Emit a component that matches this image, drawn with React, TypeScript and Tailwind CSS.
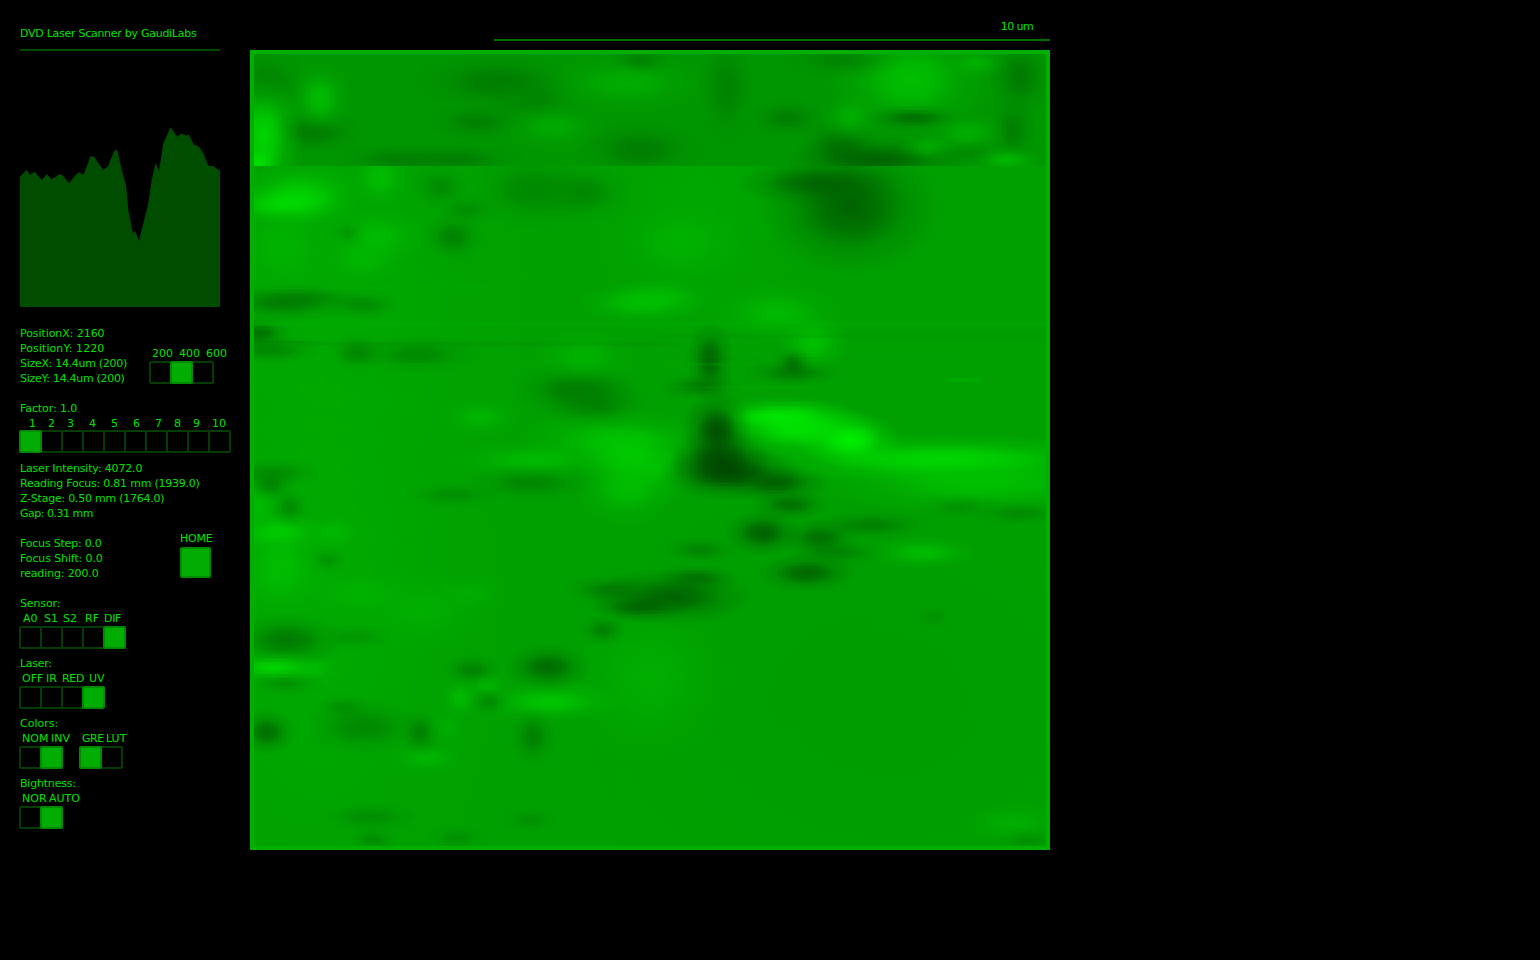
type Blob = [number, number, number, number, string];

const topBlobs: Blob[] = [
  [267, 83, 20, 18, "#008000"], [312, 132, 26, 12, "#007800"], [497, 82, 42, 15, "#007800"],
  [477, 122, 26, 10, "#007800"], [533, 100, 26, 15, "#008400"], [400, 160, 32, 9, "#007400"],
  [457, 160, 32, 9, "#007400"], [640, 62, 16, 8, "#006f00"], [640, 150, 32, 15, "#007800"],
  [320, 98, 15, 18, "#00c000"], [263, 137, 20, 32, "#00dc00"], [258, 165, 12, 10, "#00f000"],
  [553, 127, 26, 12, "#00ac00"], [627, 83, 42, 15, "#00b000"], [910, 80, 42, 28, "#00c400"],
  [977, 63, 16, 8, "#00b800"], [1020, 77, 16, 20, "#007600"], [1013, 130, 12, 18, "#007c00"],
  [727, 87, 15, 30, "#008000"], [787, 118, 20, 10, "#007400"], [843, 60, 32, 10, "#007c00"],
  [840, 147, 22, 15, "#007000"], [877, 160, 46, 12, "#005c00"], [913, 118, 26, 7, "#005c00"],
  [850, 117, 15, 12, "#00b000"], [967, 133, 20, 10, "#00b800"], [927, 147, 15, 7, "#00b400"],
  [970, 153, 18, 5, "#007c00"], [1007, 160, 18, 6, "#00d800"],
];

const lowBlobs: Blob[] = [
  [330, 300, 110, 170, "#00a800"], [320, 600, 100, 200, "#00aa00"], [880, 700, 190, 150, "#009c00"], [700, 200, 60, 90, "#00a800"],
  [300, 195, 32, 16, "#00d000"], [283, 205, 30, 10, "#00e800"], [380, 178, 15, 15, "#00c000"],
  [377, 237, 26, 15, "#00bc00"], [363, 260, 20, 12, "#00b800"], [283, 247, 26, 26, "#00b400"],
  [533, 190, 32, 20, "#008400"], [583, 193, 26, 15, "#008400"], [453, 237, 15, 12, "#007c00"],
  [440, 187, 15, 12, "#008800"], [467, 210, 16, 8, "#008400"], [348, 233, 10, 6, "#008400"],
  [640, 303, 32, 10, "#00c800"], [283, 303, 36, 10, "#006c00"], [307, 298, 32, 6, "#007400"],
  [363, 305, 20, 8, "#008000"], [260, 333, 16, 8, "#005c00"], [270, 350, 26, 3, "#006000"],
  [417, 355, 32, 10, "#007c00"], [357, 353, 15, 10, "#007800"], [577, 390, 32, 15, "#007400"],
  [597, 403, 26, 15, "#008000"], [480, 417, 20, 10, "#00bc00"], [617, 440, 52, 15, "#00c400"],
  [583, 357, 26, 15, "#00b400"], [817, 183, 42, 12, "#006400"], [850, 207, 46, 35, "#005c00"],
  [680, 243, 32, 20, "#00b400"], [660, 297, 26, 10, "#00c000"], [777, 313, 32, 15, "#00bc00"],
  [813, 343, 18, 14, "#00c400"], [710, 360, 12, 20, "#005c00"], [793, 363, 10, 8, "#006400"],
  [793, 373, 26, 4, "#005800"], [700, 387, 22, 6, "#005800"],
  [650, 467, 30, 18, "#00c000"], [943, 460, 95, 13, "#00e000"], [983, 483, 85, 16, "#00c400"],
  [780, 417, 42, 10, "#00ff00"], [850, 440, 26, 14, "#00f800"], [800, 430, 40, 14, "#00e800"],
  [717, 430, 18, 20, "#004400"], [720, 460, 26, 16, "#004400"], [730, 473, 36, 14, "#004400"],
  [777, 483, 26, 10, "#004c00"], [790, 505, 20, 8, "#005c00"], [923, 553, 28, 8, "#00c800"],
  [763, 533, 20, 12, "#005800"], [820, 538, 20, 10, "#005c00"], [807, 573, 26, 10, "#005000"],
  [697, 578, 22, 6, "#004800"], [673, 597, 42, 15, "#005c00"], [837, 553, 26, 3, "#006800"],
  [700, 550, 20, 4, "#006800"], [870, 525, 32, 8, "#007400"], [1020, 513, 26, 6, "#007400"],
  [960, 507, 22, 4, "#008000"], [933, 617, 12, 6, "#008800"], [1027, 840, 16, 5, "#007c00"],
  [1013, 823, 26, 10, "#00b400"], [650, 677, 42, 42, "#00b000"],
  [277, 533, 24, 10, "#00dc00"], [333, 533, 16, 10, "#00bc00"], [280, 567, 24, 26, "#00c000"],
  [260, 507, 10, 15, "#00bc00"], [277, 667, 26, 8, "#00ec00"], [307, 670, 20, 8, "#00bc00"],
  [550, 702, 36, 10, "#00d400"], [460, 698, 10, 10, "#00c400"], [487, 685, 10, 5, "#00c800"],
  [360, 593, 26, 12, "#00b400"], [423, 610, 32, 20, "#00b000"], [470, 593, 20, 10, "#00b000"],
  [427, 758, 18, 8, "#00bc00"], [447, 727, 10, 10, "#00b000"], [533, 460, 42, 10, "#00c400"],
  [627, 457, 26, 15, "#00cc00"], [627, 487, 26, 20, "#00c000"],
  [273, 473, 26, 8, "#008000"], [270, 485, 12, 8, "#007800"], [290, 507, 8, 10, "#008000"],
  [530, 483, 32, 10, "#007c00"], [453, 495, 26, 6, "#007800"], [287, 640, 30, 14, "#007400"],
  [548, 667, 22, 12, "#006400"], [472, 670, 15, 8, "#007400"], [490, 702, 10, 6, "#006c00"],
  [267, 732, 15, 12, "#006800"], [363, 727, 32, 15, "#008400"], [420, 733, 8, 12, "#007c00"],
  [533, 737, 12, 15, "#007c00"], [640, 607, 26, 8, "#005400"], [613, 590, 26, 8, "#006c00"],
  [603, 630, 12, 8, "#007000"], [373, 840, 12, 4, "#007000"], [457, 838, 15, 5, "#007c00"],
  [370, 817, 26, 8, "#008400"], [327, 560, 10, 5, "#007c00"], [287, 683, 20, 4, "#007c00"],
  [357, 637, 20, 6, "#008000"], [343, 707, 15, 5, "#007c00"], [530, 820, 15, 6, "#008000"],
];

const streaks: [number, number, number, string, number][] = [
  [254, 323, 792, "#00b400", 0.25], [254, 343, 420, "#008000", 0.2], [254, 340, 60, "#006c00", 0.4],
  [254, 364, 500, "#00a800", 0.3], [254, 381, 300, "#00b000", 0.25], [254, 286, 240, "#00b000", 0.25],
  [254, 272, 300, "#00ac00", 0.2], [670, 386, 140, "#00c000", 0.15], [950, 379, 30, "#00c800", 0.3],
  [660, 335, 380, "#008c00", 0.2], [760, 402, 60, "#00c800", 0.25], [650, 356, 300, "#008c00", 0.2],
];

const hist =
  "60,530 70,520 80,510 90,524 105,515 112,525 125,540 140,523 155,538 180,522 190,528 207,550 225,527 237,516 250,525 262,495 272,468 282,470 295,490 310,510 325,498 335,470 345,450 352,450 365,510 378,555 385,630 398,698 405,693 417,722 430,670 445,610 455,540 467,488 477,513 490,430 512,382 532,410 545,400 560,408 566,403 582,435 595,438 610,460 625,498 640,498 655,510 660,510 660,921 60,921";

function Cells({ n, on }: { n: number; on: number }) {
  return (
    <div className="flex">
      {Array.from({ length: n }, (_, i) => (
        <div
          key={i}
          className={
            (i === on ? "z-10 border-[#008a00] bg-[#00ad00] " : "border-[#043c04] ") +
            (i === 0 ? "" : "-ml-[2px] ") +
            "h-[23px] w-[23px] rounded-[2px] border-2"
          }
        />
      ))}
    </div>
  );
}

function Line({ children, className = "" }: { children: React.ReactNode; className?: string }) {
  return <div className={"h-[15px] whitespace-nowrap " + className}>{children}</div>;
}

function Section({ title, titleClass = "", labels, n, on, className = "", rowClass = "h-[15px]" }: { title: string; titleClass?: string; labels: [string, string][]; n: number; on: number; className?: string; rowClass?: string }) {
  return (
    <div className={className}>
      <Line className={titleClass}>{title}</Line>
      <div className={"flex whitespace-nowrap " + rowClass}>
        {labels.map(([t, c]) => (
          <div key={t} className={c}>{t}</div>
        ))}
      </div>
      <div className="-ml-[1px]">
        <Cells n={n} on={on} />
      </div>
    </div>
  );
}

function Blobs({ items, prefix }: { items: Blob[]; prefix: string }) {
  return (
    <g>
      <defs>
        {items.map(([, , , ry, c], i) => {
          const k = ry <= 6 ? 0.55 : ry <= 10 ? 0.8 : 1;
          return (
            <radialGradient key={i} id={prefix + i}>
              <stop offset="0" stopColor={c} stopOpacity={0.9 * k} />
              <stop offset="0.3" stopColor={c} stopOpacity={0.68 * k} />
              <stop offset="0.6" stopColor={c} stopOpacity={0.25 * k} />
              <stop offset="1" stopColor={c} stopOpacity="0" />
            </radialGradient>
          );
        })}
      </defs>
      {items.map(([x, y, rx, ry], i) => (
        <ellipse key={i} cx={x} cy={y} rx={Math.max(rx, 10) * 2} ry={Math.max(ry, 7) * 2} fill={`url(#${prefix}${i})`} />
      ))}
    </g>
  );
}

function Scan() {
  return (
    <svg viewBox="254 54 792 792" className="block h-[792px] w-[792px]">
      <defs>
        <filter id="thin" x="200" y="0" width="900" height="900" filterUnits="userSpaceOnUse" colorInterpolationFilters="sRGB">
          <feGaussianBlur stdDeviation="6 0.6" />
        </filter>
        <filter id="px" x="254" y="54" width="792" height="792" filterUnits="userSpaceOnUse" primitiveUnits="userSpaceOnUse" colorInterpolationFilters="sRGB">
          <feFlood x="255" y="55" width="2" height="2" floodColor="#000" />
          <feComposite x="254" y="54" width="4" height="4" />
          <feTile x="254" y="54" width="792" height="792" result="t" />
          <feComposite in="SourceGraphic" in2="t" operator="in" />
          <feMorphology operator="dilate" radius="1" />
        </filter>
        <clipPath id="band">
          <rect x="254" y="54" width="792" height="112" />
        </clipPath>
      </defs>
      <rect x="254" y="54" width="792" height="792" fill="#00a000" />
      <g filter="url(#px)">
        <rect x="254" y="54" width="792" height="792" fill="#00a000" />
        <Blobs items={lowBlobs} prefix="l" />
        <g filter="url(#thin)">
          {streaks.map(([x, y, w, c, o], i) => (
            <rect key={i} x={x} y={y} width={w} height="2" fill={c} opacity={o} />
          ))}
        </g>
        <g clipPath="url(#band)">
          <rect x="254" y="54" width="792" height="112" fill="#009600" />
          <Blobs items={topBlobs} prefix="t" />
        </g>
      </g>
    </svg>
  );
}

export default function App() {
  return (
    <div className="flex h-[960px] bg-black font-['DejaVu_Sans',sans-serif] text-[11px] leading-[15px] text-[#00e000]">
      <div className="w-[250px] pl-5 pt-[26px]">
        <Line className="tracking-[-0.27px]">DVD Laser Scanner by GaudiLabs</Line>
        <div className="mt-2 h-[2px] w-[200px] bg-[#004d00]" />
        <svg viewBox="60 381 600 540" className="mt-[76px] block h-[180px] w-[200px]">
          <polygon points={hist} fill="#004d00" />
        </svg>

        <div className="mt-[19px] flex">
          <div className="w-[129px]">
            <Line className="tracking-[-0.07px]">PositionX: 2160</Line>
            <Line className="tracking-[0.07px]">PositionY: 1220</Line>
            <Line className="tracking-[-0.3px]">SizeX: 14.4um (200)</Line>
            <Line className="tracking-[-0.3px]">SizeY: 14.4um (200)</Line>
          </div>
          <div className="pt-[20px]">
            <div className="ml-[3px] flex h-[15px]">
              <div className="w-[27px]">200</div>
              <div className="w-[27px]">400</div>
              <div>600</div>
            </div>
            <Cells n={3} on={1} />
          </div>
        </div>

        <Section
          className="mt-[15px]"
          title="Factor: 1.0"
          titleClass="tracking-[-0.09px]"
          rowClass="h-[14px]"
          n={10}
          on={0}
          labels={[
            ["1", "ml-[9px] w-[19px]"], ["2", "w-[19px]"], ["3", "w-[22px]"], ["4", "w-[22px]"], ["5", "w-[22px]"],
            ["6", "w-[22px]"], ["7", "w-[19px]"], ["8", "w-[19px]"], ["9", "w-[19px]"], ["10", ""],
          ]}
        />

        <div className="mt-2">
          <Line className="tracking-[-0.17px]">Laser Intensity: 4072.0</Line>
          <Line className="tracking-[-0.23px]">Reading Focus: 0.81 mm (1939.0)</Line>
          <Line className="tracking-[-0.24px]">Z-Stage: 0.50 mm (1764.0)</Line>
          <Line className="tracking-[-0.5px]">Gap: 0.31 mm</Line>
        </div>

        <div className="mt-[15px] flex">
          <div className="w-[160px]">
            <Line className="tracking-[-0.2px]">Focus Step: 0.0</Line>
            <Line className="tracking-[-0.12px]">Focus Shift: 0.0</Line>
            <Line className="tracking-[-0.14px]">reading: 200.0</Line>
          </div>
          <div className="-mt-[5px]">
            <Line className="tracking-[-0.25px]">HOME</Line>
            <div className="mt-px h-[31px] w-[31px] rounded-[2px] border-2 border-[#008a00] bg-[#00ad00]" />
          </div>
        </div>

        <Section
          className="mt-[15px]"
          title="Sensor:"
          titleClass="tracking-[-0.14px]"
          n={5}
          on={4}
          labels={[
            ["A0", "ml-[3px] w-[21px]"], ["S1", "w-[19px]"], ["S2", "w-[22px]"], ["RF", "w-[19px]"], ["DIF", "tracking-[-0.3px]"],
          ]}
        />
        <Section
          className="mt-[7px]"
          title="Laser:"
          titleClass="tracking-[-0.3px]"
          n={4}
          on={3}
          labels={[
            ["OFF", "ml-[2px] w-[24px]"], ["IR", "w-[16px]"], ["RED", "w-[27px] tracking-[-0.3px]"], ["UV", ""],
          ]}
        />
        <div className="mt-[7px] h-[53px]">
          <Line>Colors:</Line>
          <div className="flex">
            <div className="w-[60px]">
              <div className="ml-[2px] flex h-[15px]">
                <div className="w-[29px]">NOM</div>
                <div>INV</div>
              </div>
              <div className="-ml-[1px]">
                <Cells n={2} on={1} />
              </div>
            </div>
            <div>
              <div className="ml-[2px] flex h-[15px]">
                <div className="w-[24px] tracking-[-0.5px]">GRE</div>
                <div>LUT</div>
              </div>
              <div className="-ml-[1px]">
                <Cells n={2} on={0} />
              </div>
            </div>
          </div>
        </div>
        <Section
          className="mt-[7px]"
          title="Bightness:"
          titleClass="tracking-[-0.2px]"
          n={2}
          on={1}
          labels={[
            ["NOR", "ml-[2px] w-[27px]"], ["AUTO", ""],
          ]}
        />
      </div>

      <div className="w-[800px]">
        <div className="flex h-[50px] flex-col items-end pt-[19px]">
          <div className="mr-[17px] h-[15px] tracking-[-0.6px]">10 um</div>
          <div className="mt-[5px] h-[2px] w-[556px] bg-[#007000]" />
        </div>
        <div className="h-[800px] w-[800px] border-4 border-[#00b000]">
          <Scan />
        </div>
      </div>
    </div>
  );
}
